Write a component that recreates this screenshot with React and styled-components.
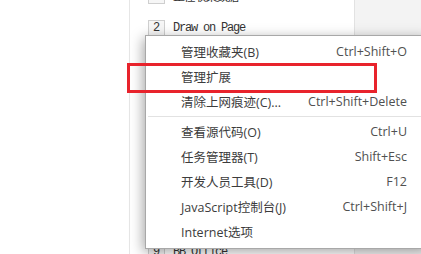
import React from 'react';
import styled, { createGlobalStyle } from 'styled-components';

const Global = createGlobalStyle`
  html, body {
    margin: 0;
    padding: 0;
    width: 421px;
    height: 254px;
    overflow: hidden;
    background: #fff;
  }
`;

const Page = styled.div`
  position: relative;
  display: flex;
  width: 421px;
  height: 254px;
  overflow: hidden;
  background: #fff;
`;

const Gutter = styled.div`
  width: 129px;
  border-right: 1px solid #e6e6e6;
  flex-shrink: 0;
`;

const Content = styled.div`
  width: 224px;
  flex-shrink: 0;
  background: #fff;
`;

const SidePanel = styled.div`
  flex: 1;
  background: #f3f3f3;
  border-left: 1px solid #e2e2e2;
`;

const List = styled.div`
  display: flex;
  flex-direction: column;
  margin-top: -20px;
`;

const Row = styled.div`
  display: flex;
  align-items: center;
  height: 32px;
  padding-left: 18px;
  gap: 8px;
  font-family: "Liberation Mono", "Noto Sans CJK SC", monospace;
  font-size: 12px;
  color: #333;
`;

const Num = styled.span`
  display: flex;
  align-items: center;
  justify-content: center;
  width: 15px;
  height: 14px;
  border: 1px solid #cfcfcf;
  background: #f6f6f6;
  color: #333;
`;

const RowText = styled.span`
  letter-spacing: -1.2px;
`;

const Menu = styled.div`
  position: absolute;
  left: 145px;
  top: 35px;
  width: 285px;
  height: 214px;
  box-sizing: border-box;
  padding-top: 3px;
  background: #fff;
  border: 1px solid #a8a8a8;
  box-shadow: -2px 3px 12px rgba(0, 0, 0, 0.35);
  font-family: "Open Sans", "Noto Sans CJK SC", sans-serif;
  font-size: 12.5px;
  color: #3c3c3c;
`;

const Item = styled.div`
  display: flex;
  align-items: center;
  justify-content: space-between;
  height: 25px;
  padding: 0 22px 0 35px;
`;

const Shortcut = styled.span`
  color: #505050;
`;

const Separator = styled.div`
  height: 1px;
  margin: 2px 0 2px 2px;
  background: #e2e2e2;
`;

const Highlight = styled.div`
  position: absolute;
  left: 127px;
  top: 63px;
  width: 250px;
  height: 30px;
  box-sizing: border-box;
  border: 3px solid #e8232c;
`;

const rows = [
  { n: '1', text: '正在收集数据' },
  { n: '2', text: 'Draw on Page' },
  { n: '3', text: 'Evernote' },
  { n: '4', text: 'FlashGot' },
  { n: '5', text: 'Gmail' },
  { n: '6', text: 'Google' },
  { n: '7', text: 'IE Tab' },
  { n: '8', text: 'LastPass' },
  { n: '9', text: 'BB Office' },
];

const groups = [
  [
    { label: '管理收藏夹(B)', key: 'Ctrl+Shift+O' },
    { label: '管理扩展', key: '' },
    { label: '清除上网痕迹(C)...', key: 'Ctrl+Shift+Delete' },
  ],
  [
    { label: '查看源代码(O)', key: 'Ctrl+U' },
    { label: '任务管理器(T)', key: 'Shift+Esc' },
    { label: '开发人员工具(D)', key: 'F12' },
    { label: 'JavaScript控制台(J)', key: 'Ctrl+Shift+J' },
    { label: 'Internet选项', key: '' },
  ],
];

function App() {
  return (
    <Page>
      <Global />
      <Gutter />
      <Content>
        <List>
          {rows.map(row => (
            <Row key={row.n}>
              <Num>{row.n}</Num>
              <RowText>{row.text}</RowText>
            </Row>
          ))}
        </List>
      </Content>
      <SidePanel />
      <Menu>
        {groups.map((group, i) => (
          <React.Fragment key={i}>
            {i > 0 && <Separator />}
            {group.map(item => (
              <Item key={item.label}>
                <span>{item.label}</span>
                <Shortcut>{item.key}</Shortcut>
              </Item>
            ))}
          </React.Fragment>
        ))}
      </Menu>
      <Highlight />
    </Page>
  );
}

export default App;
